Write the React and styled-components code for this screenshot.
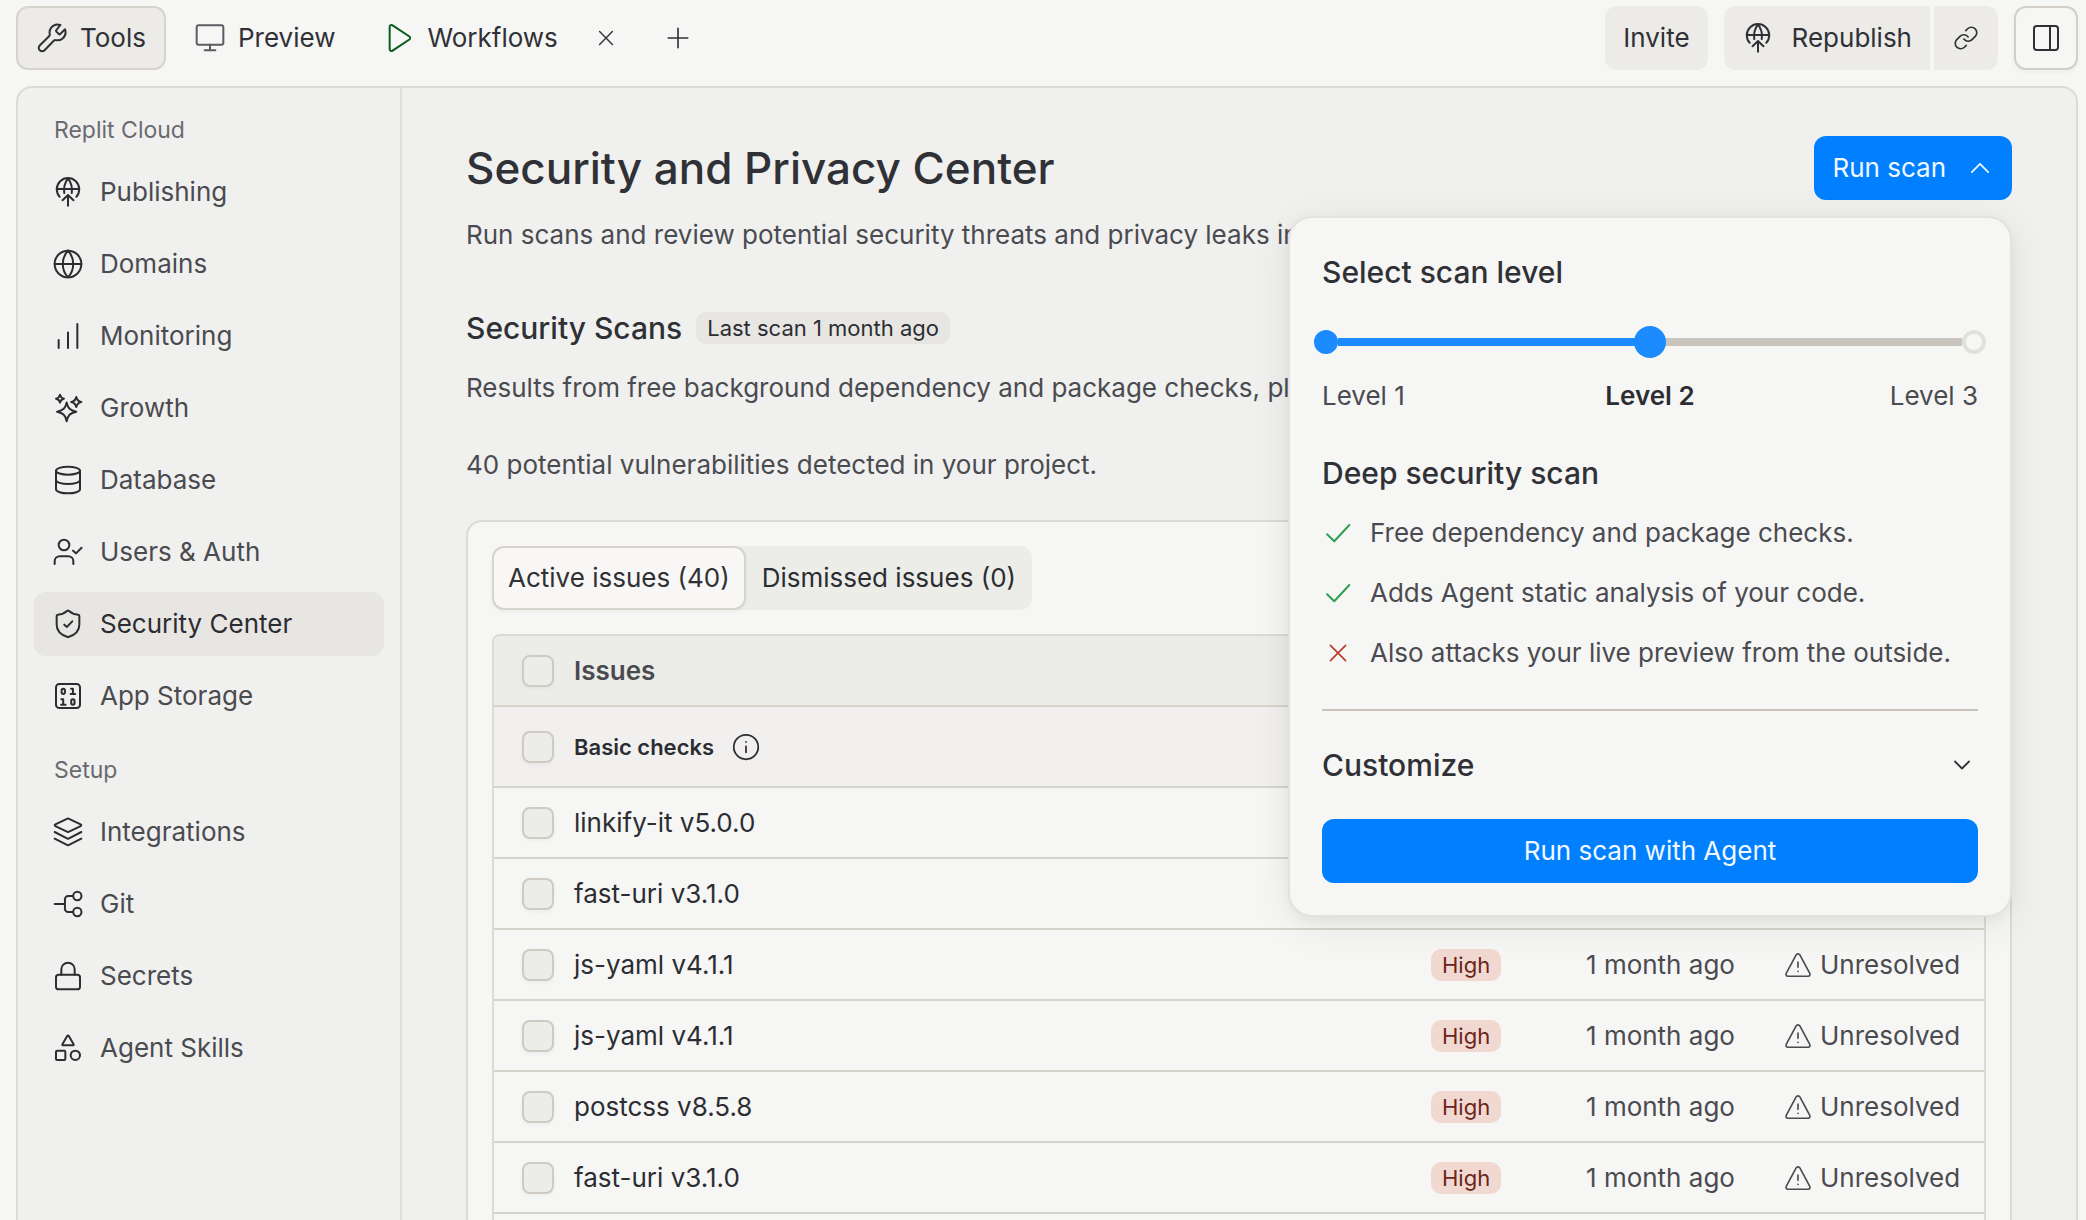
import React, { useState } from 'react';
import styled, { createGlobalStyle, css } from 'styled-components';

const color = {
  page: '#f6f6f4',
  panel: '#f0f0ee',
  control: '#ecebe7',
  selected: '#e8e6e2',
  head: '#ecede8',
  group: '#f1f0ee',
  line: '#dbdad4',
  rule: '#d7d4cd',
  strong: '#2c2d32',
  text: '#303136',
  body: '#4a4b51',
  muted: '#6a6b71',
  blue: '#0080ff',
};

const Global = createGlobalStyle`
  *, *::before, *::after { box-sizing: border-box; }
  html, body { margin: 0; background: ${color.page}; }
  body, button, input {
    font-family: Inter, "Liberation Sans", sans-serif;
    font-size: 26px;
    line-height: 40px;
    color: ${color.text};
  }
  button { margin: 0; padding: 0; border: 0; background: none; cursor: pointer; }
  h1, h2, h3, p, ul { margin: 0; padding: 0; font-weight: 400; }
  ul { list-style: none; }
  a { color: inherit; text-decoration: none; }
`;

/* ---------- icons ---------- */

const Svg = styled.svg`
  flex: none;
  display: block;
  width: ${(p) => p.$size}px;
  height: ${(p) => p.$size}px;
  fill: none;
  stroke: ${(p) => p.$tone || 'currentColor'};
  stroke-width: ${(p) => p.$weight || 1.5};
  stroke-linecap: round;
  stroke-linejoin: round;
`;

const shapes = {
  wrench: (
    <path d="M18.300 2.200c-2.500-.8-5.300 0-6.900 2-1.200 1.500-1.400 3.300-1.100 5.100a1.500 1.500 0 0 1-.5 1.400L2.800 17.600a2.400 2.400 0 0 0 3.600 3.600l6.900-7.100a1.500 1.500 0 0 1 1.400-.5c1.800.3 3.600.1 5.100-1.100 2-1.600 2.800-4.500 2-7l-3.600 3.500a.8.8 0 0 1-1.100 0l-1.800-1.800a.8.8 0 0 1 0-1.200z" />
  ),
  monitor: (
    <>
      <rect x="2" y="2.500" width="20" height="14.500" rx="1.500" />
      <path d="M12 17v4M8 21.200h8" />
    </>
  ),
  play: <path d="M5 3.600v16.800a1.400 1.400 0 0 0 2.200 1.100l12.600-8.400a1.400 1.400 0 0 0 0-2.200L7.200 2.500A1.400 1.400 0 0 0 5 3.600z" />,
  close: <path d="M5 5l14 14M19 5L5 19" />,
  plus: <path d="M12 3v18M3 12h18" />,
  publish: (
    <>
      <path d="M5.800 15.600a8.400 8.400 0 1 1 12.400 0" />
      <path d="M3.600 9.800h16.800M9.200 12.800C8.600 9 9.600 5 12 1.800c2.400 3.200 3.400 7.200 2.800 11" />
      <path d="M12 22.300V14.400M7.900 18.200L12 14.200l4.100 4" />
    </>
  ),
  globe: (
    <>
      <circle cx="12" cy="12" r="10" />
      <path d="M2 12h20M12 2c5.200 5.600 5.200 14.400 0 20M12 2c-5.200 5.600-5.200 14.400 0 20" />
    </>
  ),
  bars: <path d="M5 15v6M12 9.300v11.700M19 3v18" />,
  sparkles: (
    <>
      <path d="M11 7.800c.9 4.500 2.500 6 7.200 7-4.700 1-6.300 2.500-7.200 7.200-.9-4.700-2.500-6.200-7.200-7.200 4.700-1 6.300-2.500 7.200-7z" />
      <path d="M6 2c.4 1.900 1.100 2.600 3 3-1.900.4-2.600 1.100-3 3-.4-1.900-1.100-2.600-3-3 1.900-.4 2.600-1.100 3-3zM18.200 3.700c.5 2.400 1.400 3.300 3.800 3.800-2.400.5-3.300 1.400-3.800 3.800-.5-2.400-1.400-3.300-3.800-3.800 2.400-.5 3.300-1.400 3.800-3.800z" />
    </>
  ),
  database: (
    <>
      <ellipse cx="12" cy="5" rx="9" ry="3" />
      <path d="M3 5v14c0 1.700 4 3 9 3s9-1.300 9-3V5M3 12c0 1.700 4 3 9 3s9-1.300 9-3" />
    </>
  ),
  user: (
    <>
      <circle cx="9" cy="6.750" r="4" />
      <path d="M2 21v-2a3.800 3.800 0 0 1 3.800-3.800h6.400A3.800 3.800 0 0 1 16 19v2M15.800 11l2.200 2 4.200-4.200" />
    </>
  ),
  shield: (
    <>
      <path d="M20.500 12.500c0 5-3.800 7.800-8.160 9.200a1 1 0 0 1-.67 0C7.300 20.300 3.500 17.500 3.500 12.500V6a1 1 0 0 1 .9-1c2.400-.2 5-1 6.840-2.720a1.170 1.170 0 0 1 1.520 0C14.600 4 17.200 4.800 19.600 5a1 1 0 0 1 .9 1z" />
      <path d="M9.200 12.500l2 1.700 4-4.200" />
    </>
  ),
  storage: (
    <>
      <rect x="3" y="3" width="18" height="18" rx="2.500" />
      <path d="M14.300 6.500h1.400V10.500M14 10.500h3.400M7 14.500h1.400v4M6.800 18.500h3.400" />
      <rect x="7.200" y="6.500" width="2.500" height="4" rx="1.250" />
      <rect x="14.400" y="14.500" width="2.500" height="4" rx="1.250" />
    </>
  ),
  layers: (
    <path d="M12.400 2l9.100 4.300a.7.7 0 0 1 0 1.300l-9.100 4.300a1 1 0 0 1-.8 0L2.500 7.600a.7.7 0 0 1 0-1.300L11.600 2a1 1 0 0 1 .8 0zM2 12l9.600 4.900a1 1 0 0 0 .8 0L22 12M2 17l9.600 4.900a1 1 0 0 0 .8 0L22 17" />
  ),
  git: (
    <>
      <path d="M2 12h7.700M15.700 6h-3.500a2.500 2.500 0 0 0-2.500 2.500v7a2.500 2.500 0 0 0 2.500 2.500h3.500" />
      <circle cx="19" cy="6" r="3.100" />
      <circle cx="19" cy="18" r="3.100" />
    </>
  ),
  lock: (
    <>
      <rect x="3" y="11" width="18" height="11" rx="2" />
      <path d="M7 11V7a5 5 0 0 1 10 0v4" />
    </>
  ),
  shapes: (
    <>
      <path d="M11.400 3L7.800 9.100a.6.600 0 0 0 .5.900h7.400a.6.600 0 0 0 .5-.9L12.600 3a.7.700 0 0 0-1.200 0z" />
      <rect x="3" y="14" width="7" height="7" rx=".8" />
      <circle cx="17.500" cy="17.500" r="3.500" />
    </>
  ),
  link: (
    <path d="M10 13a5 5 0 0 0 7.540.54l3-3a5 5 0 0 0-7.070-7.070l-1.720 1.710M14 11a5 5 0 0 0-7.540-.54l-3 3a5 5 0 0 0 7.070 7.070l1.710-1.710" />
  ),
  panel: (
    <>
      <rect x="3" y="3" width="18" height="18" rx="2" />
      <path d="M15 3v18" />
    </>
  ),
  up: <path d="M5 15.500L12 8.500l7 7" />,
  down: <path d="M5 8.500l7 7 7-7" />,
  check: <path d="M3.800 13l5.400 5.200L20.500 6" />,
  cross: <path d="M5 5l14 14M19 5L5 19" />,
  info: (
    <>
      <circle cx="12" cy="12" r="10.500" />
      <path d="M12 11.500v5M12 7.600v.1" />
    </>
  ),
  alert: (
    <>
      <path d="M10.400 3.400L1.900 19.200a1.600 1.600 0 0 0 1.400 2.400h17.400a1.600 1.600 0 0 0 1.400-2.400L13.600 3.400a1.800 1.800 0 0 0-3.200 0z" />
      <path d="M12 9.500v4.500M12 17.400v.1" />
    </>
  ),
};

const Icon = ({ name, size = 32, weight, tone }) => (
  <Svg viewBox="0 0 24 24" $size={size} $weight={weight} $tone={tone} aria-hidden="true">
    {shapes[name]}
  </Svg>
);

/* ---------- shell ---------- */

const Shell = styled.div`
  display: flex;
  flex-direction: column;
  height: 100vh;
  overflow: hidden;
  padding: 6px 8px 0 16px;
`;

const TopBar = styled.header`
  display: flex;
  justify-content: space-between;
  align-items: center;
  margin-bottom: 16px;
`;

const Tabs = styled.nav`
  display: flex;
  align-items: center;
  gap: 8px;
`;

const Tab = styled.button`
  display: flex;
  align-items: center;
  gap: 12px;
  height: 64px;
  padding: 0 18px;
  border: 2px solid transparent;
  border-radius: 12px;
  ${(p) => p.$active && css`
    background: ${color.control};
    border-color: ${color.rule};
  `}
`;

const IconButton = styled.button`
  display: grid;
  place-items: center;
  width: ${(p) => p.$width || 64}px;
  height: 64px;
  color: ${color.text};
`;

const Actions = styled.div`
  display: flex;
  gap: 16px;
`;

const Soft = styled.button`
  display: flex;
  align-items: center;
  gap: 18px;
  height: 64px;
  padding: 0 18px;
  background: ${color.control};
  border-radius: 12px;
`;

const Split = styled.div`
  display: flex;
  gap: 4px;
  & > :first-child { border-radius: 12px 0 0 12px; }
  & > :last-child { border-radius: 0 12px 12px 0; }
`;

const LinkButton = styled(IconButton)`
  background: ${color.control};
`;

const OutlineButton = styled(IconButton)`
  border: 2px solid #d3cfc8;
  border-radius: 12px;
  box-shadow: 0 2px 4px rgba(0, 0, 0, 0.04);
`;

const Panel = styled.div`
  flex: 1;
  min-height: 0;
  display: flex;
  background: ${color.panel};
  border: 2px solid ${color.line};
  border-bottom: 0;
  border-radius: 16px 16px 0 0;
  overflow: hidden;
`;

/* ---------- sidebar ---------- */

const Sidebar = styled.aside`
  flex: none;
  width: 384px;
  padding: 0 16px;
  border-right: 2px solid #e1e0dd;
`;

const Section = styled.section`
  padding-top: 12px;
`;

const SectionTitle = styled.h3`
  padding: 10px 20px;
  font-size: 23px;
  line-height: 40px;
  color: ${color.muted};
`;

const NavList = styled.ul`
  display: flex;
  flex-direction: column;
  gap: 8px;
`;

const NavLink = styled.a`
  display: flex;
  align-items: center;
  gap: 16px;
  height: 64px;
  padding: 0 18px;
  border-radius: 12px;
  color: ${(p) => (p.$active ? color.strong : color.body)};
  background: ${(p) => (p.$active ? color.selected : 'transparent')};
`;

/* ---------- main ---------- */

const Main = styled.main`
  flex: 1;
  min-width: 0;
  padding: 48px 64px;
  overflow-y: auto;
  scrollbar-width: none;
`;

const TitleRow = styled.div`
  display: flex;
  justify-content: space-between;
  align-items: center;
`;

const Title = styled.h1`
  font-size: 44px;
  line-height: 64px;
  font-weight: 500;
  color: ${color.text};
`;

const Text = styled.p`
  color: ${color.body};
  margin-top: ${(p) => p.$space}px;
`;

const ScanHead = styled.div`
  display: flex;
  align-items: center;
  gap: 14px;
  margin-top: 53px;
`;

const Heading = styled.h2`
  font-size: 30px;
  line-height: 40px;
  font-weight: 500;
  color: ${color.text};
`;

const Pill = styled.span`
  display: block;
  width: fit-content;
  padding: 0 11px;
  border-radius: 10px;
  font-size: 22px;
  line-height: 32px;
  color: ${(p) => (p.$danger ? '#6b2419' : color.strong)};
  background: ${(p) => (p.$danger ? '#f1d9d2' : color.selected)};
`;

const Card = styled.section`
  margin-top: 35px;
  padding: 24px;
  background: ${color.page};
  border: 2px solid ${color.line};
  border-radius: 16px;
`;

const Segmented = styled.div`
  display: flex;
  width: fit-content;
  border-radius: 12px;
  background: ${color.head};
`;

const Segment = styled.button`
  height: 64px;
  padding: 0 14px;
  border: 2px solid transparent;
  border-radius: 12px;
  color: ${color.strong};
  ${(p) => p.$active && css`
    color: ${color.text};
    background: #f8f7f6;
    border-color: ${color.rule};
    box-shadow: 0 2px 4px rgba(0, 0, 0, 0.04);
  `}
`;

const TableFrame = styled.div`
  margin-top: 24px;
  border: 2px solid ${color.line};
  border-radius: 8px;
  overflow: hidden;
`;

const Table = styled.table`
  width: 100%;
  border-collapse: separate;
  border-spacing: 0;
`;

const Row = styled.tr`
  height: ${(p) => (p.$group ? 81 : 71)}px;
  background: ${(p) => (p.$group ? color.group : p.$head ? color.head : color.page)};
`;

const cell = css`
  padding: 0;
  text-align: left;
  vertical-align: middle;
  border-bottom: 2px solid ${color.rule};
  white-space: nowrap;
`;

const Cell = styled.td`
  ${cell}
  color: ${(p) => (p.$name ? color.strong : color.body)};
  width: ${(p) => (p.$width ? `${p.$width}px` : 'auto')};
`;

const HeadCell = styled.th`
  ${cell}
  font-weight: 600;
  color: ${color.body};
`;

const CheckLabel = styled.label`
  display: flex;
  align-items: center;
  gap: 20px;
  padding-left: 28px;
`;

const Check = styled.input.attrs({ type: 'checkbox' })`
  appearance: none;
  flex: none;
  width: 32px;
  height: 32px;
  margin: 0;
  border: 2px solid #cfcac2;
  border-radius: 8px;
  background: ${color.head};
  box-shadow: 0 2px 4px rgba(0, 0, 0, 0.04);
`;

const GroupName = styled.strong`
  display: flex;
  align-items: center;
  gap: 18px;
  font-size: 22px;
  font-weight: 600;
  color: ${color.strong};
`;

const Status = styled.span`
  display: flex;
  align-items: center;
  gap: 8px;
`;

/* ---------- scan menu ---------- */

const Anchor = styled.div`
  position: relative;
`;

const Primary = styled.button`
  display: flex;
  align-items: center;
  justify-content: center;
  gap: 20px;
  width: ${(p) => (p.$wide ? '100%' : 'auto')};
  height: 64px;
  padding: 0 18px;
  border-radius: 12px;
  background: ${color.blue};
  color: #f2f8ff;
`;

const Popover = styled.div`
  position: absolute;
  z-index: 2;
  top: calc(100% + 16px);
  right: 0;
  width: 724px;
  padding: 34px 32px 32px;
  background: ${color.page};
  border: 2px solid #e3e2df;
  border-radius: 24px;
  box-shadow: 0 8px 40px rgba(0, 0, 0, 0.08), 0 4px 12px rgba(0, 0, 0, 0.04);
`;

const Slider = styled.div`
  display: flex;
  align-items: center;
  height: 32px;
  margin: 34px -8px 0;
`;

const Stop = styled.span`
  flex: none;
  width: 24px;
  height: 24px;
  border-radius: 50%;
  border: 4px solid ${(p) => (p.$on ? '#1c8bff' : '#e1e1dc')};
  background: ${(p) => (p.$on ? '#1c8bff' : color.page)};
`;

const Range = styled.input.attrs({ type: 'range' })`
  appearance: none;
  flex: 1;
  min-width: 0;
  height: 32px;
  margin: 0;
  background: transparent;
  &::-webkit-slider-runnable-track {
    height: 8px;
    background: linear-gradient(to right, #1c8bff 50%, #c9c4bd 50%);
  }
  &::-webkit-slider-thumb {
    appearance: none;
    width: 32px;
    height: 32px;
    margin-top: -12px;
    border-radius: 50%;
    background: #1c8bff;
  }
`;

const Levels = styled.div`
  display: grid;
  grid-template-columns: 1fr 1fr 1fr;
  margin: 18px 0 37px;
  color: ${color.body};
  & > :nth-child(2) { text-align: center; font-weight: 600; color: ${color.strong}; }
  & > :nth-child(3) { text-align: right; }
`;

const Checks = styled.ul`
  display: flex;
  flex-direction: column;
  gap: 20px;
  margin-top: 20px;
  padding-bottom: 36px;
  border-bottom: 2px solid #c9c3bb;
`;

const CheckItem = styled.li`
  display: flex;
  align-items: center;
  gap: 16px;
  color: ${color.body};
`;

const Mark = styled.span`
  display: grid;
  place-items: center;
  width: 32px;
`;

const Customize = styled.button`
  display: flex;
  justify-content: space-between;
  align-items: center;
  width: 100%;
  margin: 34px 0;
  font-size: 30px;
  font-weight: 500;
  padding-right: 4px;
`;

/* ---------- data ---------- */

const sections = [
  {
    title: 'Replit Cloud',
    items: [
      ['publish', 'Publishing'],
      ['globe', 'Domains'],
      ['bars', 'Monitoring'],
      ['sparkles', 'Growth'],
      ['database', 'Database'],
      ['user', 'Users & Auth'],
      ['shield', 'Security Center'],
      ['storage', 'App Storage'],
    ],
  },
  {
    title: 'Setup',
    items: [
      ['layers', 'Integrations'],
      ['git', 'Git'],
      ['lock', 'Secrets'],
      ['shapes', 'Agent Skills'],
    ],
  },
];

const issues = [
  'linkify-it v5.0.0',
  'fast-uri v3.1.0',
  'js-yaml v4.1.1',
  'js-yaml v4.1.1',
  'postcss v8.5.8',
  'fast-uri v3.1.0',
  'postcss v8.5.8',
];

const included = [
  ['Free dependency and package checks.', true],
  ['Adds Agent static analysis of your code.', true],
  ['Also attacks your live preview from the outside.', false],
];

const ScanMenu = () => {
  const [level, setLevel] = useState(2);
  return (
    <Popover role="dialog" aria-label="Select scan level">
      <Heading>Select scan level</Heading>
      <Slider>
        <Stop $on />
        <Range
          aria-label="Scan level"
          min="1"
          max="3"
          value={level}
          onChange={(e) => setLevel(Number(e.target.value))}
        />
        <Stop />
      </Slider>
      <Levels>
        <span>Level 1</span>
        <span>Level 2</span>
        <span>Level 3</span>
      </Levels>
      <Heading>Deep security scan</Heading>
      <Checks>
        {included.map(([label, on]) => (
          <CheckItem key={label}>
            <Mark>
              <Icon
                name={on ? 'check' : 'cross'}
                size={on ? 32 : 26}
                weight={1.5}
                tone={on ? '#2f9e50' : '#b83a2b'}
              />
            </Mark>
            {label}
          </CheckItem>
        ))}
      </Checks>
      <Customize>
        Customize
        <Icon name="down" size={24} weight={1.8} />
      </Customize>
      <Primary $wide>Run scan with Agent</Primary>
    </Popover>
  );
};

export default function App() {
  return (
    <>
      <Global />
      <Shell>
        <TopBar>
          <Tabs>
            <Tab $active>
              <Icon name="wrench" />
              Tools
            </Tab>
            <Tab>
              <Icon name="monitor" tone="#5b5c64" />
              Preview
            </Tab>
            <Tab>
              <Icon name="play" tone="#0b5a1e" />
              Workflows
            </Tab>
            <IconButton $width={40} aria-label="Close tab">
              <Icon name="close" size={22} />
            </IconButton>
            <IconButton $width={88} aria-label="New tab">
              <Icon name="plus" size={26} />
            </IconButton>
          </Tabs>
          <Actions>
            <Soft>Invite</Soft>
            <Split>
              <Soft>
                <Icon name="publish" />
                Republish
              </Soft>
              <LinkButton aria-label="Copy link">
                <Icon name="link" size={26} />
              </LinkButton>
            </Split>
            <OutlineButton aria-label="Toggle panel">
              <Icon name="panel" />
            </OutlineButton>
          </Actions>
        </TopBar>

        <Panel>
          <Sidebar>
            {sections.map((section) => (
              <Section key={section.title}>
                <SectionTitle>{section.title}</SectionTitle>
                <NavList>
                  {section.items.map(([icon, label]) => (
                    <li key={label}>
                      <NavLink href="#" $active={label === 'Security Center'}>
                        <Icon name={icon} tone={color.strong} />
                        {label}
                      </NavLink>
                    </li>
                  ))}
                </NavList>
              </Section>
            ))}
          </Sidebar>

          <Main>
            <TitleRow>
              <Title>Security and Privacy Center</Title>
              <Anchor>
                <Primary aria-expanded="true">
                  Run scan
                  <Icon name="up" size={28} />
                </Primary>
                <ScanMenu />
              </Anchor>
            </TitleRow>
            <Text $space={15}>
              Run scans and review potential security threats and privacy leaks in your app.
            </Text>

            <ScanHead>
              <Heading>Security Scans</Heading>
              <Pill>Last scan 1 month ago</Pill>
            </ScanHead>
            <Text $space={20}>
              Results from free background dependency and package checks, plus Agent scans.
            </Text>
            <Text $space={37}>40 potential vulnerabilities detected in your project.</Text>

            <Card>
              <Segmented>
                <Segment $active>Active issues (40)</Segment>
                <Segment>Dismissed issues (0)</Segment>
              </Segmented>
              <TableFrame>
                <Table>
                  <thead>
                    <Row $head>
                      <HeadCell colSpan={4}>
                        <CheckLabel>
                          <Check />
                          Issues
                        </CheckLabel>
                      </HeadCell>
                    </Row>
                  </thead>
                  <tbody>
                    <Row $group>
                      <Cell colSpan={4}>
                        <CheckLabel>
                          <Check />
                          <GroupName>
                            Basic checks
                            <Icon name="info" size={28} tone={color.strong} />
                          </GroupName>
                        </CheckLabel>
                      </Cell>
                    </Row>
                    {issues.map((name, i) => (
                      <Row key={i}>
                        <Cell $name>
                          <CheckLabel>
                            <Check />
                            {name}
                          </CheckLabel>
                        </Cell>
                        <Cell $width={155}>
                          <Pill $danger>High</Pill>
                        </Cell>
                        <Cell $width={198}>1 month ago</Cell>
                        <Cell $width={200}>
                          <Status>
                            <Icon name="alert" size={28} weight={1.4} />
                            Unresolved
                          </Status>
                        </Cell>
                      </Row>
                    ))}
                  </tbody>
                </Table>
              </TableFrame>
            </Card>
          </Main>
        </Panel>
      </Shell>
    </>
  );
}
